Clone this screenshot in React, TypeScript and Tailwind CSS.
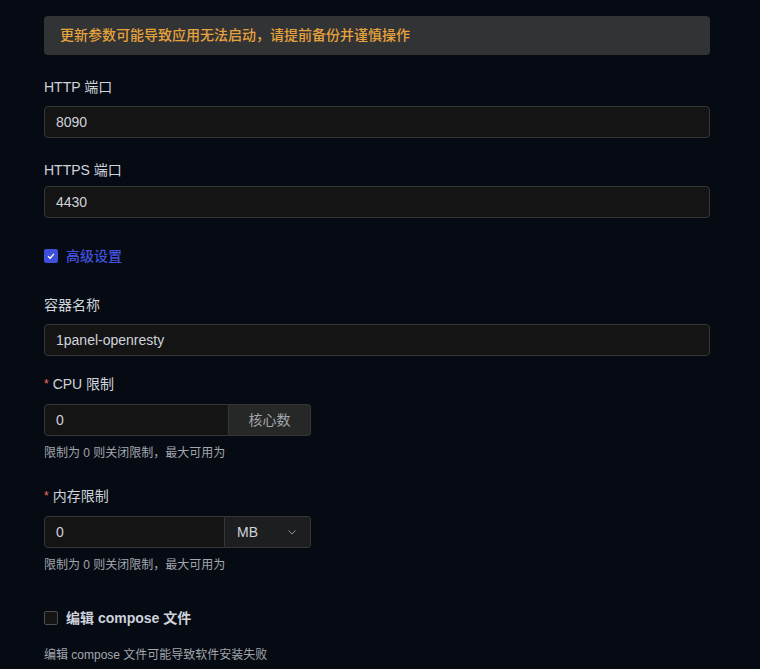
const font = { fontFamily: '"Helvetica Neue", "Liberation Sans", "Noto Sans CJK SC", sans-serif' };

function Label({ text, required }: { text: string; required?: boolean }) {
    return (
        <div className="h-[32px] flex items-center text-[14px] text-[#cfd3dc] leading-none">
            {required && <span className="text-[#f56c6c] mr-[4px] text-[12px]">*</span>}
            {text}
        </div>
    );
}

function TextInput({ value }: { value: string }) {
    return (
        <div className="h-[32px] w-full rounded-[4px] border border-[#363637] bg-[#141414] px-[11px] flex items-center text-[14px] text-[#cfd3dc]">
            {value}
        </div>
    );
}

function Help({ text }: { text: string }) {
    return <div className="text-[12px] text-[#a3a6ad] leading-[20px] pt-[7px]">{text}</div>;
}

export default function App() {
    return (
        <div className="min-h-[669px] w-[760px] bg-[#060b13] px-[44px] pt-[16px] overflow-hidden" style={font}>
            {/* Warning */}
            <div className="h-[39px] w-[666px] rounded-[4px] bg-[#313335] px-[16px] flex items-center text-[14px] font-medium text-[#e6a23c]">
                更新参数可能导致应用无法启动，请提前备份并谨慎操作
            </div>

            <div className="mt-[16px] w-[666px]">
                <Label text="HTTP 端口" />
                <div className="mt-[3px]">
                    <TextInput value="8090" />
                </div>

                <div className="mt-[16px]">
                    <Label text="HTTPS 端口" />
                </div>
                <TextInput value="4430" />

                {/* Advanced */}
                <div className="mt-[23px] h-[30px] flex items-center">
                    <div className="w-[14px] h-[14px] rounded-[2px] bg-[#3e4fd9] flex items-center justify-center">
                        <svg width="10" height="10" viewBox="0 0 10 10">
                            <path d="M2 5.2 L4.2 7.2 L8 2.8" stroke="#fff" strokeWidth="1.3" fill="none" />
                        </svg>
                    </div>
                    <span className="ml-[8px] text-[14px] text-[#4251dd] font-medium">高级设置</span>
                </div>

                <div className="mt-[18px]">
                    <Label text="容器名称" />
                </div>
                <div className="mt-[3px]">
                    <TextInput value="1panel-openresty" />
                </div>

                <div className="mt-[12px]">
                    <Label text="CPU 限制" required />
                </div>
                <div className="mt-[4px] flex w-[267px] h-[32px]">
                    <div className="flex-1 h-full rounded-l-[4px] border border-[#363637] bg-[#141414] px-[11px] flex items-center text-[14px] text-[#cfd3dc]">
                        0
                    </div>
                    <div className="w-[82px] h-full rounded-r-[4px] border border-l-0 border-[#363637] bg-[#262727] flex items-center justify-center text-[14px] text-[#a3a6ad]">
                        核心数
                    </div>
                </div>
                <Help text="限制为 0 则关闭限制，最大可用为" />

                <div className="mt-[17px]">
                    <Label text="内存限制" required />
                </div>
                <div className="mt-[4px] flex w-[267px] h-[32px]">
                    <div className="flex-1 h-full rounded-l-[4px] border border-[#363637] bg-[#141414] px-[11px] flex items-center text-[14px] text-[#cfd3dc]">
                        0
                    </div>
                    <div className="w-[86px] h-full rounded-r-[4px] border border-l-0 border-[#363637] bg-[#1d1e1f] pl-[12px] pr-[12px] flex items-center justify-between text-[14px] text-[#cfd3dc]">
                        <span>MB</span>
                        <svg width="12" height="12" viewBox="0 0 12 12">
                            <path d="M2.5 4.5 L6 8 L9.5 4.5" stroke="#8d9095" strokeWidth="1" fill="none" />
                        </svg>
                    </div>
                </div>
                <Help text="限制为 0 则关闭限制，最大可用为" />

                {/* Compose */}
                <div className="mt-[28px] h-[30px] flex items-center">
                    <div className="w-[14px] h-[14px] rounded-[2px] border border-[#4c4d4f] bg-[#141414]" />
                    <span className="ml-[8px] text-[14px] text-[#cfd3dc] font-bold">编辑 compose 文件</span>
                </div>
                <div className="mt-[12px] text-[12px] text-[#a3a6ad] leading-[20px]">
                    编辑 compose 文件可能导致软件安装失败
                </div>
            </div>
        </div>
    );
}
